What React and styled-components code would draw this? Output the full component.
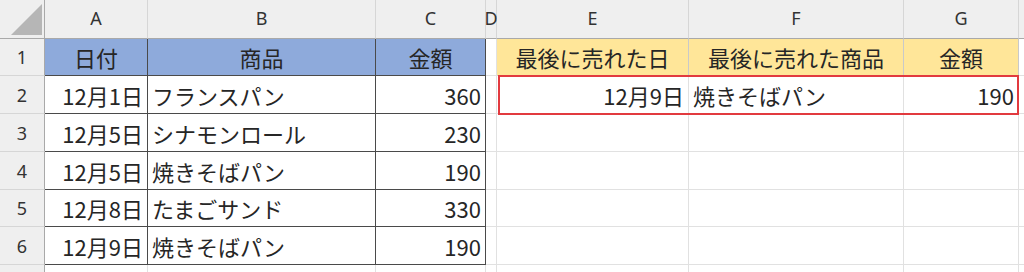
import React from "react";
import styled, { createGlobalStyle } from "styled-components";

const GlobalStyle = createGlobalStyle`
  html, body { margin: 0; padding: 0; background: #ffffff; }
  body { width: 1024px; height: 272px; overflow: hidden; }
`;

const COLUMNS = ["A", "B", "C", "D", "E", "F", "G", ""];

const Sheet = styled.div`
  display: grid;
  grid-template-columns: 45px 103px 228px 110px 11px 192px 215px 115px 1fr;
  grid-template-rows: 39px 37px 38px 38px 38px 37px 38px 38px;
  height: 272px;
  width: 1024px;
  overflow: hidden;
  background: #ffffff;
  font-family: "Noto Sans CJK JP", "Noto Sans", sans-serif;
`;

const Corner = styled.div`
  grid-row: 1;
  grid-column: 1;
  box-sizing: border-box;
  background: #efefef;
  border-right: 1px solid #a9a9a9;
  border-bottom: 1px solid #a9a9a9;
  display: flex;
`;

const ColHeader = styled.div`
  grid-row: 1;
  grid-column: ${(p) => p.$col};
  box-sizing: border-box;
  background: #efefef;
  border-right: 1px solid #d6d6d6;
  border-bottom: 1px solid #a9a9a9;
  display: flex;
  align-items: center;
  justify-content: center;
  font-family: "Noto Sans", "Open Sans", sans-serif;
  font-size: 18px;
  color: #333333;
  padding-bottom: 3px;
`;

const RowHeader = styled.div`
  grid-row: ${(p) => p.$row};
  grid-column: 1;
  box-sizing: border-box;
  background: #efefef;
  border-right: 1px solid #a9a9a9;
  border-bottom: 1px solid #d6d6d6;
  display: flex;
  align-items: center;
  justify-content: center;
  font-family: "Noto Sans", "Open Sans", sans-serif;
  font-size: 18px;
  color: #333333;
`;

const Cell = styled.div`
  grid-row: ${(p) => p.$row};
  grid-column: ${(p) => p.$col};
  box-sizing: border-box;
  background: ${(p) => p.$bg || "#ffffff"};
  border-right: 1px solid ${(p) => p.$rightLine || "#e1e1e1"};
  border-bottom: 1px solid ${(p) => p.$bottomLine || "#e1e1e1"};
  display: flex;
  align-items: center;
  justify-content: ${(p) =>
    p.$align === "right" ? "flex-end" : p.$align === "center" ? "center" : "flex-start"};
  padding: 0 4px 0 4px;
  font-size: 22px;
  color: #262626;
  white-space: nowrap;
  overflow: visible;
`;

const Highlight = styled.div`
  grid-row: 3;
  grid-column: 6 / 9;
  margin: -1px 0 -1px 1px;
  border: 2px solid #e23a3f;
  pointer-events: none;
  z-index: 1;
`;

const BLUE = "#8eaadb";
const YELLOW = "#ffe699";
const DARK = "#4a4a4a";

// rows of the sheet: each entry is [text, align] for columns A..G
const rows = [
  [["日付", "center"], ["商品", "center"], ["金額", "center"], null, ["最後に売れた日", "center"], ["最後に売れた商品", "center"], ["金額", "center"]],
  [["12月1日", "right"], ["フランスパン", "left"], ["360", "right"], null, ["12月9日", "right"], ["焼きそばパン", "left"], ["190", "right"]],
  [["12月5日", "right"], ["シナモンロール", "left"], ["230", "right"]],
  [["12月5日", "right"], ["焼きそばパン", "left"], ["190", "right"]],
  [["12月8日", "right"], ["たまごサンド", "left"], ["330", "right"]],
  [["12月9日", "right"], ["焼きそばパン", "left"], ["190", "right"]],
  [],
];

function cellStyle(rowIndex, colIndex) {
  const inTable = rowIndex < 6 && colIndex < 3;
  const style = {};
  if (rowIndex === 0 && colIndex < 3) style.bg = BLUE;
  if (rowIndex === 0 && colIndex >= 4 && colIndex <= 6) style.bg = YELLOW;
  if (inTable) {
    style.right = DARK;
    style.bottom = DARK;
  }
  if (rowIndex === 0 && colIndex >= 4 && colIndex <= 6) {
    style.right = "#c9c9c9";
    style.bottom = "#d0d0d0";
  }
  return style;
}

function CornerMark() {
  return (
    <svg width="44" height="38" viewBox="0 0 44 38">
      <polygon points="11,35 42,4 42,35" fill="#b6b6b6" />
    </svg>
  );
}

export default function App() {
  return (
    <>
      <GlobalStyle />
      <Sheet>
        <Corner>
          <CornerMark />
        </Corner>
        {COLUMNS.map((c, i) => (
          <ColHeader key={`h${i}`} $col={i + 2}>
            {c}
          </ColHeader>
        ))}
        {rows.map((row, r) => (
          <React.Fragment key={`r${r}`}>
            <RowHeader $row={r + 2}>{r + 1}</RowHeader>
            {COLUMNS.map((_, c) => {
              const entry = row[c];
              const s = cellStyle(r, c);
              return (
                <Cell
                  key={`c${r}-${c}`}
                  $row={r + 2}
                  $col={c + 2}
                  $bg={s.bg}
                  $rightLine={s.right}
                  $bottomLine={s.bottom}
                  $align={entry ? entry[1] : "left"}
                >
                  {entry ? entry[0] : ""}
                </Cell>
              );
            })}
          </React.Fragment>
        ))}
        <Highlight />
      </Sheet>
    </>
  );
}
